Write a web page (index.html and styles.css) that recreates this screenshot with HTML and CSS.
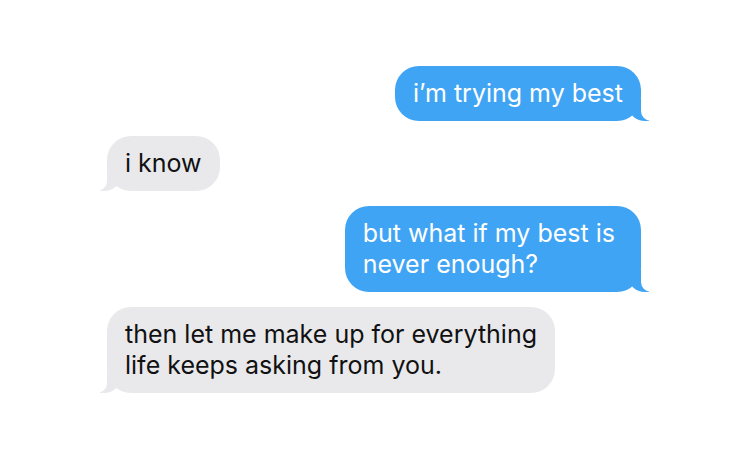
FILE: index.html
```html
<!DOCTYPE html>
<html lang="en">
<head>
  <meta charset="UTF-8" />
  <title>Messages</title>
  <link rel="stylesheet" href="styles.css">
</head>
<body>
  <div class="thread">
    <div class="bubble sent">i’m trying my best</div>
    <div class="bubble received">i know</div>
    <div class="bubble sent wrapped">but what if my best is<br>never enough?</div>
    <div class="bubble received">then let me make up for everything<br>life keeps asking from you.</div>
  </div>
</body>
</html>
```

FILE: styles.css
```css
body {
  margin: 0;
  background: #fff;
  font-family: Inter, "Noto Sans", sans-serif;
}

.thread {
  display: flex;
  flex-direction: column;
  gap: 15px;
  padding: 66px 109px 0 107px;
}

.bubble {
  position: relative;
  padding: 12px 18px;
  border-radius: 24px;
  font-size: 25px;
  line-height: 31px;
  white-space: nowrap;
}

/* multi-line bubbles keep some slack on the right */
.bubble.wrapped {
  padding-right: 26px;
}

/* tail: coloured blob, then a white cut-out over it */
.bubble::before,
.bubble::after {
  content: "";
  position: absolute;
  bottom: 0;
  height: 22px;
}

.sent {
  align-self: flex-end;
  background: #40a4f4;
  color: #fff;
}

.sent::before {
  right: -8px;
  width: 20px;
  background: #40a4f4;
  border-bottom-left-radius: 16px 14px;
}

.sent::after {
  right: -26px;
  width: 26px;
  background: #fff;
  border-bottom-left-radius: 10px;
}

.received {
  align-self: flex-start;
  background: #e9e9eb;
  color: #111;
}

.received::before {
  left: -7px;
  width: 20px;
  background: #e9e9eb;
  border-bottom-right-radius: 16px 14px;
}

.received::after {
  left: -26px;
  width: 26px;
  background: #fff;
  border-bottom-right-radius: 10px;
}
```
